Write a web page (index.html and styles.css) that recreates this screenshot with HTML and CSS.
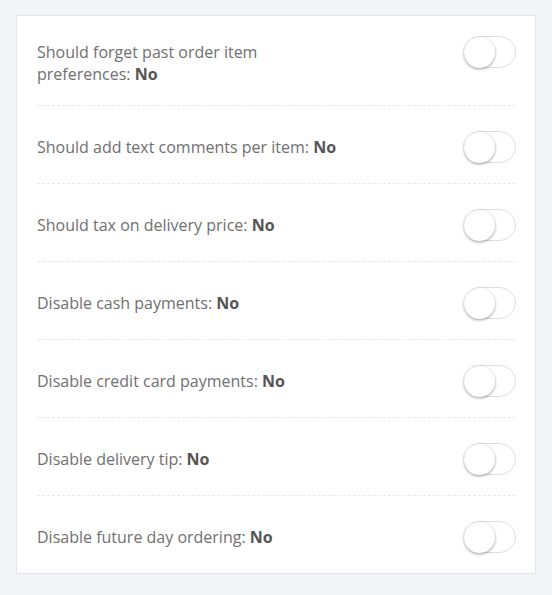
FILE: index.html
```html
<!DOCTYPE html>
<html lang="en">
<head>
<meta charset="utf-8">
<title>Settings</title>
<link rel="stylesheet" href="styles.css">
</head>
<body>
<div class="card">
  <div class="row">
    <div class="label">Should forget past order item<br>preferences: <b>No</b></div>
    <span class="switch"><span class="knob"></span></span>
  </div>
  <div class="row">
    <div class="label">Should add text comments per item: <b>No</b></div>
    <span class="switch"><span class="knob"></span></span>
  </div>
  <div class="row">
    <div class="label">Should tax on delivery price: <b>No</b></div>
    <span class="switch"><span class="knob"></span></span>
  </div>
  <div class="row">
    <div class="label">Disable cash payments: <b>No</b></div>
    <span class="switch"><span class="knob"></span></span>
  </div>
  <div class="row">
    <div class="label">Disable credit card payments: <b>No</b></div>
    <span class="switch"><span class="knob"></span></span>
  </div>
  <div class="row">
    <div class="label">Disable delivery tip: <b>No</b></div>
    <span class="switch"><span class="knob"></span></span>
  </div>
  <div class="row">
    <div class="label">Disable future day ordering: <b>No</b></div>
    <span class="switch"><span class="knob"></span></span>
  </div>
</div>
</body>
</html>
```
FILE: styles.css
```css
html, body {
  margin: 0;
  background: #f3f4f8;
}
body {
  padding: 15px 16px;
  font-family: "Open Sans", "Liberation Sans", sans-serif;
  font-size: 16px;
  line-height: 22px;
  color: #707070;
}
.card {
  background: #fff;
  border: 1px solid #e3e5ea;
  padding: 0 19px 0 20px;
}
.row {
  display: flex;
  align-items: flex-start;
  justify-content: space-between;
  padding: 25px 0 20px;
  border-bottom: 1px dashed #e8e8e8;
}
.row:first-child {
  padding-top: 20px;
}
.row:last-child {
  border-bottom: none;
}
.label {
  margin-top: 5px;
}
.label b {
  font-weight: 700;
  color: #555;
}
.switch {
  position: relative;
  flex: none;
  width: 50px;
  height: 30px;
  border: 1px solid #dfdfdf;
  border-radius: 20px;
  background: #fff;
}
.knob {
  position: absolute;
  left: -1px;
  top: 0;
  width: 31px;
  height: 31px;
  border-radius: 50%;
  background: #fff;
  box-shadow: 0 1px 3px rgba(0, 0, 0, 0.4);
}
```
